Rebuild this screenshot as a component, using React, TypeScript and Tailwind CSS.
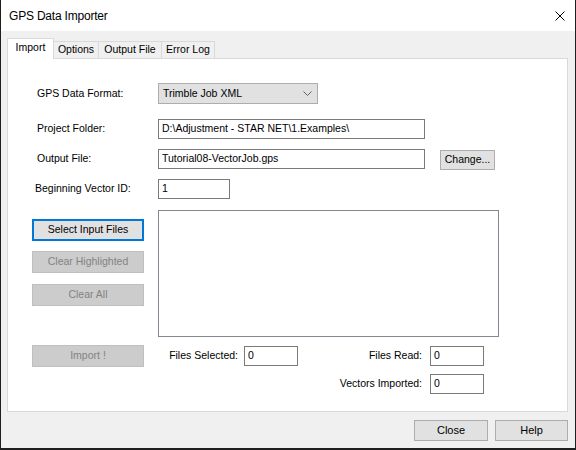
import type { ReactNode } from "react";

// simple win32-ish controls
function TextBox({ value, w }: { value: string; w: string }) {
  return (
    <div className={`${w} h-[20px] border border-[#7a7a7a] bg-white flex items-center pl-[3px] whitespace-nowrap overflow-hidden`}>
      {value}
    </div>
  );
}

function Btn({
  children,
  w,
  h = "h-[22px]",
  disabled = false,
  focused = false,
}: {
  children: ReactNode;
  w: string;
  h?: string;
  disabled?: boolean;
  focused?: boolean;
}) {
  let cls = "bg-[#e1e1e1] border border-[#adadad] text-black";
  if (disabled) cls = "bg-[#cccccc] border border-[#bfbfbf] text-[#838383]";
  if (focused) cls = "bg-[#e1e1e1] border-2 border-[#0078d7] text-black";
  return (
    <div className={`${w} ${h} ${cls} flex items-center justify-center whitespace-nowrap`}>
      {children}
    </div>
  );
}

function Row({ label, children, mt, lpad = "pl-[5px]" }: { label: string; children: ReactNode; mt: string; lpad?: string }) {
  return (
    <div className={`flex items-center ${mt}`}>
      <div className={`w-[126px] ${lpad} whitespace-nowrap`}>{label}</div>
      {children}
    </div>
  );
}

const tabs = [
  { name: "Import", w: "w-[47px]" },
  { name: "Options", w: "w-[46px]" },
  { name: "Output File", w: "w-[64px]" },
  { name: "Error Log", w: "w-[54px]" },
];

export default function App() {
  return (
    <div className="w-[576px] h-[450px] bg-[#1f1f1f] font-['Liberation_Sans',Arial,sans-serif] text-[10.5px] text-black">
      <div className="ml-px w-[574px] h-[448px] bg-[#f0f0f0] flex flex-col">
        {/* title bar */}
        <div className="h-[31px] bg-white flex items-center justify-between pl-[8px] pr-[10px] shrink-0">
          <span className="text-[12px] tracking-[-0.2px]">GPS Data Importer</span>
          <svg width="10" height="10" viewBox="0 0 10 10" className="mt-[1px]">
            <path d="M0.5 0.5 L9.5 9.5 M9.5 0.5 L0.5 9.5" stroke="#000" strokeWidth="1" />
          </svg>
        </div>

        {/* tabs */}
        <div className="ml-[6px] h-[27px] flex items-end shrink-0">
          {tabs.map((t, i) =>
            i === 0 ? (
              <div
                key={t.name}
                className={`${t.w} h-[21px] -mb-px relative z-10 bg-white border border-b-0 border-[#d9d9d9] flex items-center justify-center pb-[2px]`}
              >
                {t.name}
              </div>
            ) : (
              <div
                key={t.name}
                className={`${t.w} h-[17px] -ml-px bg-[#f0f0f0] border border-b-0 border-[#d9d9d9] flex items-center justify-center`}
              >
                {t.name}
              </div>
            )
          )}
        </div>

        {/* tab panel */}
        <div className="ml-[6px] w-[561px] h-[354px] bg-white border border-[#d9d9d9] pl-[24px] pt-[24px] shrink-0">
          <Row label="GPS Data Format:" mt="mt-0">
            <div className="w-[160px] h-[21px] bg-[#e1e1e1] border border-[#adadad] flex items-center justify-between pl-[4px] pr-[5px]">
              <span>Trimble Job XML</span>
              <svg width="9" height="5" viewBox="0 0 9 5">
                <path d="M0.5 0.5 L4.5 4.5 L8.5 0.5" fill="none" stroke="#606060" strokeWidth="1" />
              </svg>
            </div>
          </Row>
          <Row label="Project Folder:" mt="mt-[15px]">
            <TextBox value="D:\Adjustment - STAR NET\1.Examples\" w="w-[267px]" />
          </Row>
          <Row label="Output File:" mt="mt-[10px]">
            <TextBox value="Tutorial08-VectorJob.gps" w="w-[267px]" />
            <div className="ml-[15px] self-start mt-px -mb-px">
              <Btn w="w-[55px]" h="h-[20px]">
                Change...
              </Btn>
            </div>
          </Row>
          <Row label="Beginning Vector ID:" mt="mt-[10px]" lpad="pl-[3px]">
            <TextBox value="1" w="w-[72px]" />
          </Row>

          {/* files block */}
          <div className="flex mt-[11px]">
            <div className="w-[112px] flex flex-col pt-[9px]">
              <Btn w="w-[112px]" focused>
                Select Input Files
              </Btn>
              <div className="mt-[10px]">
                <Btn w="w-[112px]" disabled>
                  Clear Highlighted
                </Btn>
              </div>
              <div className="mt-[11px]">
                <Btn w="w-[112px]" disabled>
                  Clear All
                </Btn>
              </div>
            </div>
            <div className="ml-[14px] w-[341px] h-[127px] border border-[#828790] bg-white" />
          </div>

          {/* counters */}
          <div className="flex items-start mt-[8px]">
            <Btn w="w-[112px]" disabled>
              Import !
            </Btn>
            <div className="w-[100px] h-[20px] mt-px flex items-center justify-end pr-[6px] whitespace-nowrap">
              Files Selected:
            </div>
            <div className="mt-px">
              <TextBox value="0" w="w-[54px]" />
            </div>
            <div className="w-[132px] h-[20px] mt-px flex items-center justify-end pr-[8px] whitespace-nowrap">
              Files Read:
            </div>
            <div className="mt-px">
              <TextBox value="0" w="w-[54px]" />
            </div>
          </div>
          <div className="flex items-center mt-[7px] pl-[266px]">
            <div className="w-[132px] h-[20px] flex items-center justify-end pr-[8px] whitespace-nowrap">
              Vectors Imported:
            </div>
            <TextBox value="0" w="w-[54px]" />
          </div>
        </div>

        {/* dialog buttons */}
        <div className="ml-[6px] w-[561px] flex justify-end gap-[7px] mt-[8px] text-[11px]">
          <Btn w="w-[74px]" h="h-[21px]">
            Close
          </Btn>
          <Btn w="w-[73px]" h="h-[21px]">
            Help
          </Btn>
        </div>
      </div>
    </div>
  );
}
